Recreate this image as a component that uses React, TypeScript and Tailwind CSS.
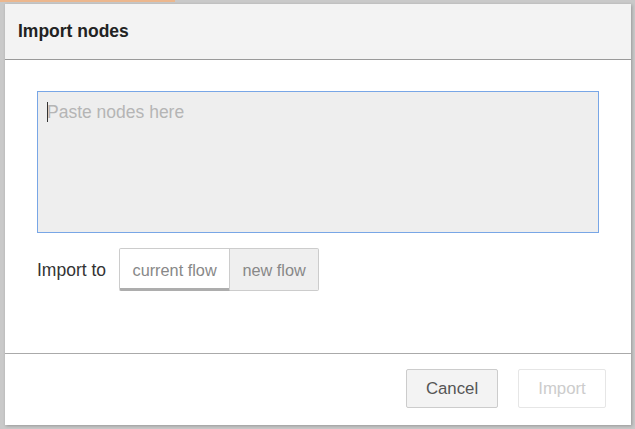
import { useState } from "react"

export default function App() {
  const [target, setTarget] = useState("current")
  const [text, setText] = useState("")

  return (
    <div
      className="relative w-[635px] h-[429px] overflow-hidden bg-[#c9c9c9]"
      style={{ fontFamily: '"Liberation Sans", Arial, sans-serif' }}
    >
      {/* tab highlight peeking out behind the dialog */}
      <div className="absolute top-0 left-0 w-[175px] h-[2px] bg-[#ecb78e]" />

      <div className="ml-[5px] mt-[4px] w-[626px] h-[421px] flex flex-col bg-white shadow-[1px_1px_3px_rgba(0,0,0,0.25)]">
        <div className="h-[56px] flex items-center pl-[13px] bg-[#f3f3f3] border-b border-[#999]">
          <span className="text-[17.5px] font-bold text-[#222]">Import nodes</span>
        </div>

        <div className="flex-1 px-[32px] pt-[31px]">
          <div className="relative">
            <textarea
              value={text}
              onChange={(e) => setText(e.target.value)}
              placeholder="Paste nodes here"
              className="block w-full h-[142px] resize-none border border-[#78a6e6] bg-[#eeeeee] pl-[9px] pt-[9px] text-[17.5px] leading-[22px] text-[#333] placeholder:text-[#b5b5b5] outline-none"
            />
            {text === "" && (
              <span className="absolute left-[10px] top-[11px] w-[1px] h-[20px] bg-[#333]" />
            )}
          </div>

          <div className="flex items-center mt-[15px]">
            <span className="text-[17.5px] text-[#333] mr-[13px] pt-[2px]">Import to</span>
            <div className="flex">
              <button
                onClick={() => setTarget("current")}
                className={
                  target === "current"
                    ? "h-[43px] w-[111px] pt-[3px] text-[16.3px] text-[#888] bg-white border border-[#ccc] border-b-[3px] border-b-[#adadad] rounded-l-[2px]"
                    : "h-[43px] w-[111px] pt-[1px] text-[16.3px] text-[#888] bg-[#efefef] border border-[#ccc] rounded-l-[2px]"
                }
              >
                current flow
              </button>
              <button
                onClick={() => setTarget("new")}
                className={
                  target === "new"
                    ? "h-[43px] w-[89px] pt-[3px] text-[16.3px] text-[#888] bg-white border border-l-0 border-[#ccc] border-b-[3px] border-b-[#adadad] rounded-r-[2px]"
                    : "h-[43px] w-[89px] pt-[1px] text-[16.3px] text-[#888] bg-[#efefef] border border-l-0 border-[#ccc] rounded-r-[2px]"
                }
              >
                new flow
              </button>
            </div>
          </div>
        </div>

        <div className="h-[72px] flex justify-end items-start gap-[20px] pt-[15px] pr-[25px] border-t border-[#aaa]">
          <button className="h-[39px] w-[92px] text-[16.8px] text-[#555] bg-[#f3f3f3] border border-[#ccc] rounded-[2px]">
            Cancel
          </button>
          <button
            disabled={text === ""}
            className="h-[39px] w-[88px] text-[16.8px] text-[#ccc] bg-white border border-[#e6e6e6] rounded-[2px]"
          >
            Import
          </button>
        </div>
      </div>
    </div>
  )
}
